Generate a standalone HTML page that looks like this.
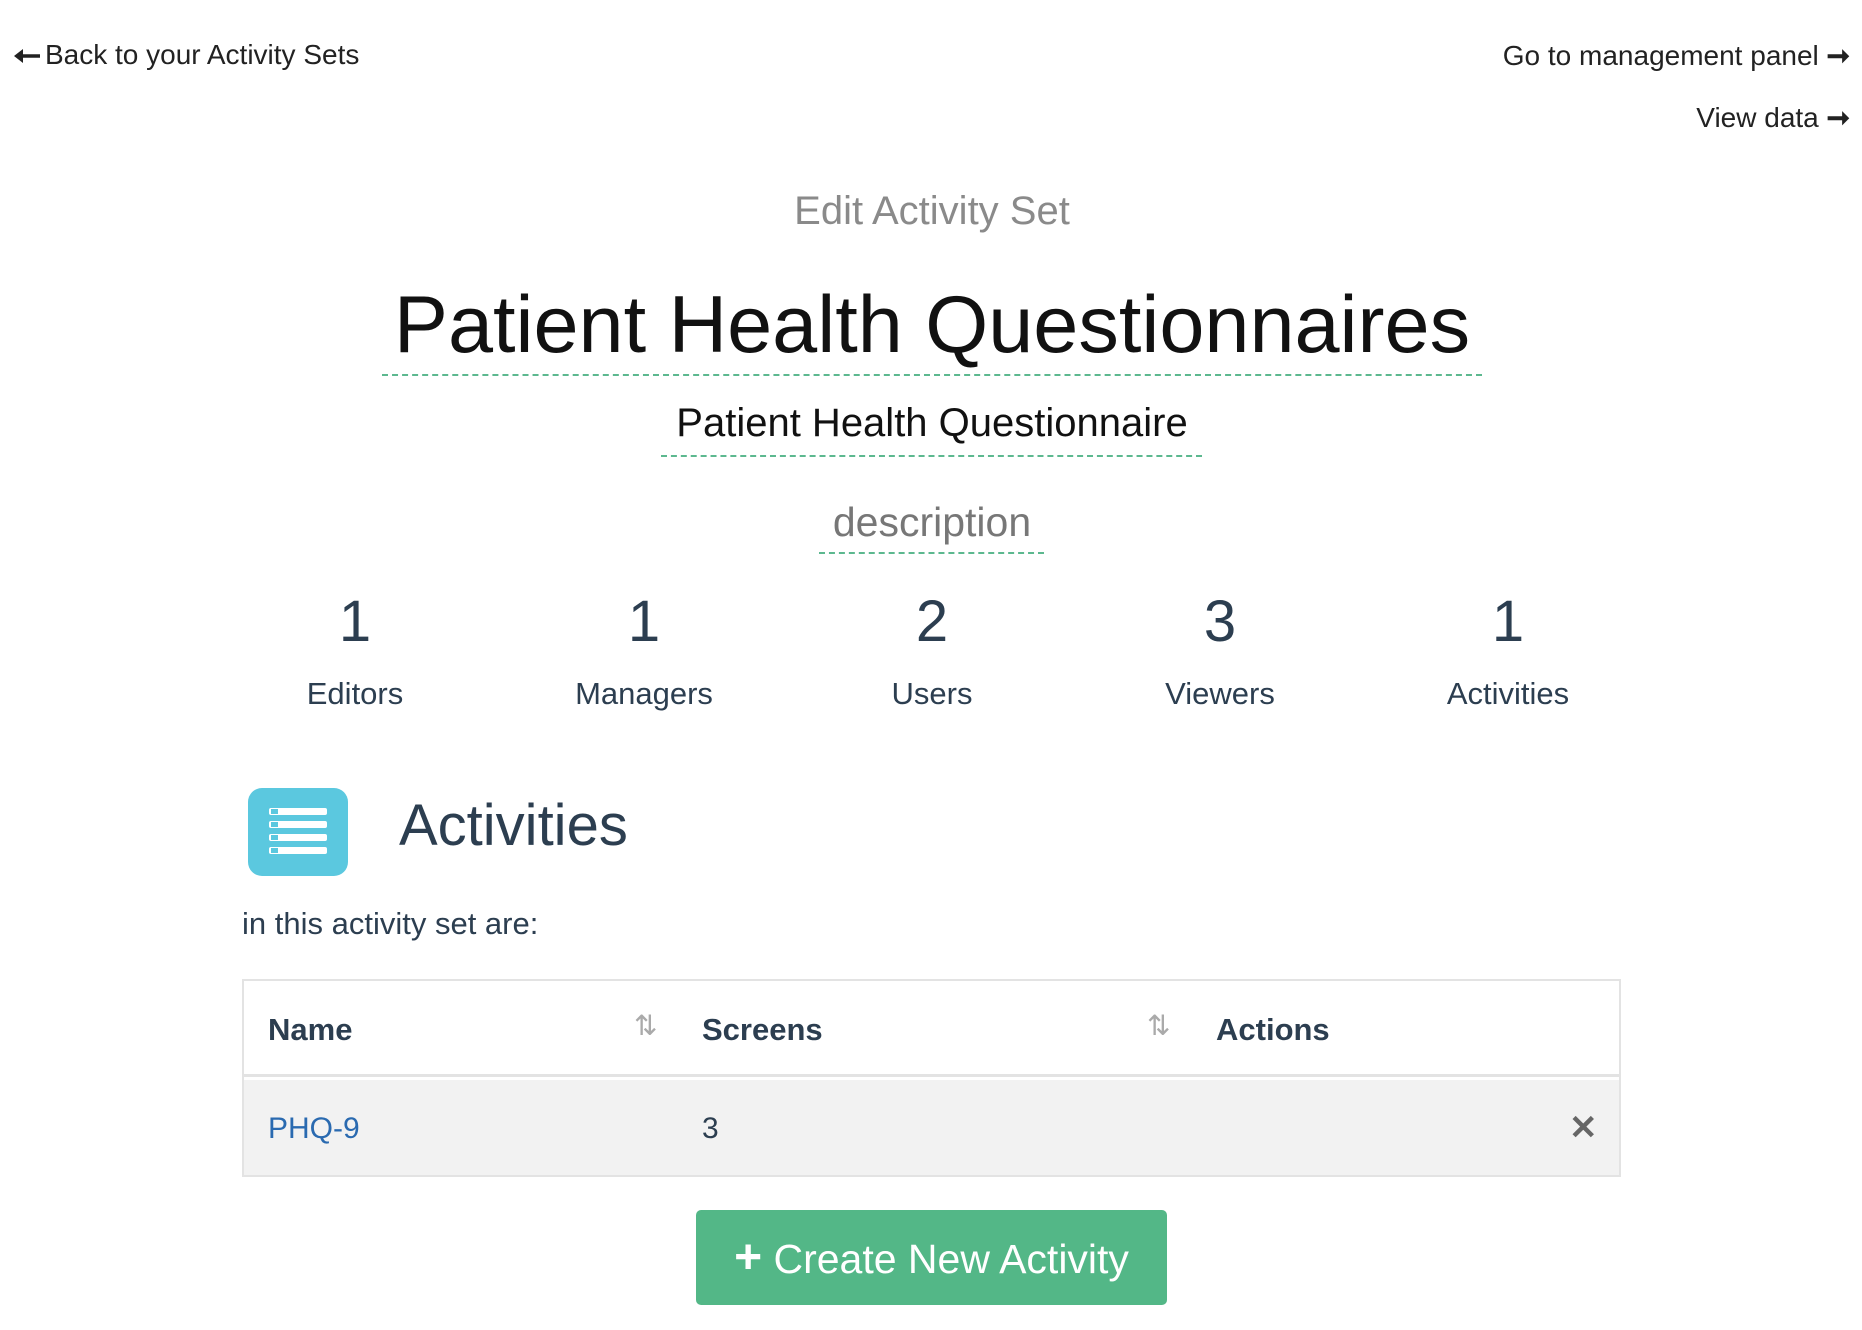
<!DOCTYPE html>
<html><head><meta charset="utf-8"><style>
*{margin:0;padding:0;box-sizing:border-box}
body{width:1862px;height:1330px;background:#fff;font-family:"Liberation Sans",sans-serif;color:#2c3e50;position:relative;overflow:hidden}
.a{position:absolute;white-space:nowrap}
.c{transform:translateX(-50%);text-align:center}
.dash{position:absolute;border-top:2px dashed #5cb88f}
.row{position:absolute;left:21px;width:58px;height:7px;background:#fff;border-radius:2px}
.row i{position:absolute;left:2px;top:1px;width:7px;height:5px;background:#5bc8df}
</style></head><body>
<svg class="a" style="left:14px;top:48px" width="26" height="16" viewBox="0 0 26 16"><path d="M26 8H6" stroke="#222" stroke-width="3.5"/><path d="M0 8L9 1V15Z" fill="#222"/></svg>
<div class="a" style="left:45px;top:39px;font-size:28px;color:#222">Back to your Activity Sets</div>
<div class="a" style="right:12px;top:39px;font-size:28px;color:#222">Go to management panel <b>&#10142;</b></div>
<div class="a" style="right:12px;top:101px;font-size:28px;color:#222">View data <b>&#10142;</b></div>
<div class="a c" style="left:932px;top:189px;font-size:40px;color:#8a8a8a;font-weight:300">Edit Activity Set</div>
<div class="a c" style="left:932px;top:279px;font-size:81px;color:#111">Patient Health Questionnaires</div>
<div class="dash" style="left:382px;width:1100px;top:374px"></div>
<div class="a c" style="left:932px;top:401px;font-size:40px;color:#111">Patient Health Questionnaire</div>
<div class="dash" style="left:661px;width:541px;top:455px"></div>
<div class="a c" style="left:932px;top:499px;font-size:41px;color:#777">description</div>
<div class="dash" style="left:819px;width:225px;top:552px"></div>
<div class="a c" style="left:355px;top:588px;font-size:58px">1</div>
<div class="a c" style="left:644px;top:588px;font-size:58px">1</div>
<div class="a c" style="left:932px;top:588px;font-size:58px">2</div>
<div class="a c" style="left:1220px;top:588px;font-size:58px">3</div>
<div class="a c" style="left:1508px;top:588px;font-size:58px">1</div>
<div class="a c" style="left:355px;top:676px;font-size:31px">Editors</div>
<div class="a c" style="left:644px;top:676px;font-size:31px">Managers</div>
<div class="a c" style="left:932px;top:676px;font-size:31px">Users</div>
<div class="a c" style="left:1220px;top:676px;font-size:31px">Viewers</div>
<div class="a c" style="left:1508px;top:676px;font-size:31px">Activities</div>
<div class="a" style="left:248px;top:788px;width:100px;height:88px;background:#5bc8df;border-radius:14px">
 <div class="row" style="top:20px"><i></i></div>
 <div class="row" style="top:33px"><i></i></div>
 <div class="row" style="top:46px"><i></i></div>
 <div class="row" style="top:59px"><i></i></div>
</div>
<div class="a" style="left:399px;top:792px;font-size:58px">Activities</div>
<div class="a" style="left:242px;top:906px;font-size:31px">in this activity set are:</div>
<div class="a" style="left:242px;top:979px;width:1379px;height:198px;border:2px solid #e3e3e3">
 <div style="position:absolute;left:0;top:0;right:0;height:96px;border-bottom:3px solid #e3e3e3;background:#fff"></div>
 <div style="position:absolute;left:0;top:99px;right:0;bottom:0;background:#f2f2f2"></div>
 <div class="a" style="left:24px;top:31px;font-size:31px;font-weight:bold">Name</div>
 <div class="a" style="left:390px;top:28px;font-size:28px;color:#aaa">&#8645;</div>
 <div class="a" style="left:458px;top:31px;font-size:31px;font-weight:bold">Screens</div>
 <div class="a" style="left:903px;top:28px;font-size:28px;color:#aaa">&#8645;</div>
 <div class="a" style="left:972px;top:31px;font-size:31px;font-weight:bold">Actions</div>
 <div class="a" style="left:24px;top:131px;font-size:30px;color:#2a6ab0">PHQ-9</div>
 <div class="a" style="left:458px;top:131px;font-size:30px">3</div>
 <div class="a" style="left:1325px;top:127px;font-size:34px;color:#666;font-weight:bold">&#10005;</div>
</div>
<div class="a" style="left:696px;top:1210px;width:471px;height:95px;background:#53b787;border-radius:5px;color:#fff;font-size:41px;line-height:95px;text-align:center"><b style="font-size:48px">+</b> Create New Activity</div>
</body></html>
